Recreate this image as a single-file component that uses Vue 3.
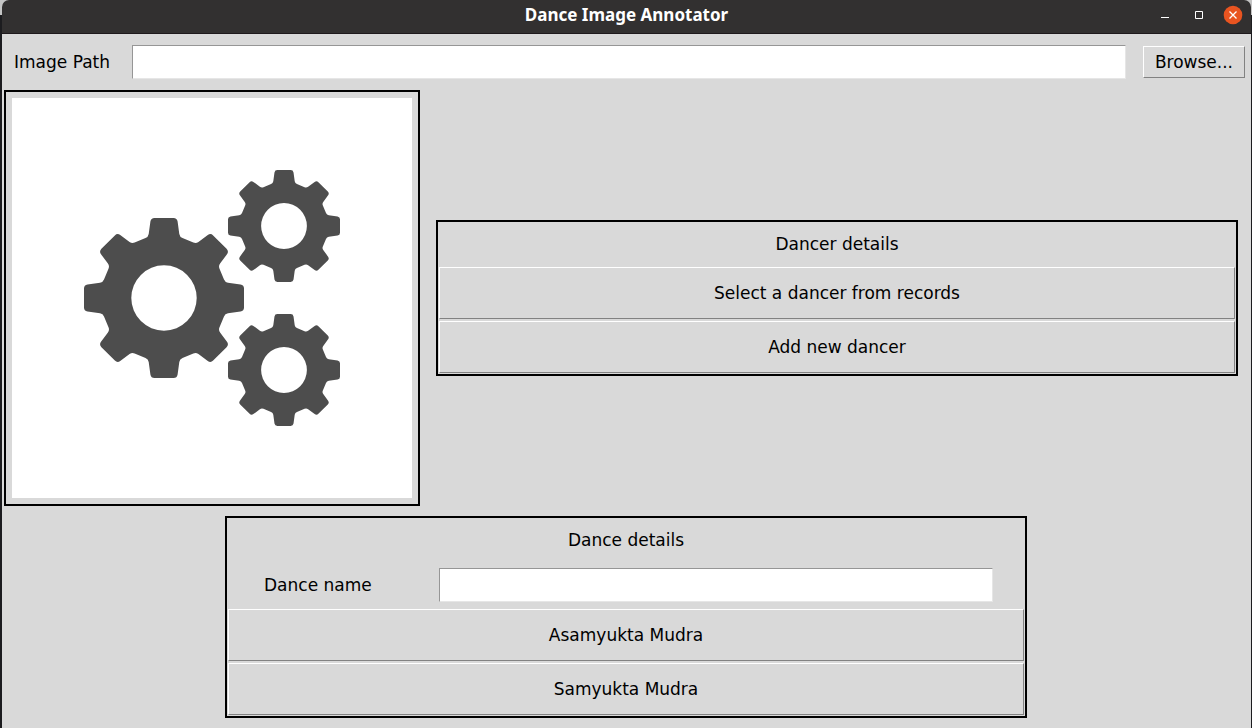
<script setup>
import { ref } from 'vue'

const imagePath = ref('')
const danceName = ref('')

// One tooth pointing up, listed clockwise: [command, ...points]
const makeTooth = (r) => [
  ['L', [-18.5, -60]],
  ['Q', [-15.8, -61], [-15.3, -64]],
  ['L', [-13.6, -r + 3.5]],
  ['Q', [-13, -r], [-9.5, -r]],
  ['L', [9.5, -r]],
  ['Q', [13, -r], [13.6, -r + 3.5]],
  ['L', [15.3, -64]],
  ['Q', [15.8, -61], [18.5, -60]],
]

function buildGear() {
  let d = ''
  for (let i = 0; i < 8; i++) {
    const a = (i * Math.PI) / 4
    const c = Math.cos(a)
    const s = Math.sin(a)
    // The diagonal teeth are a little shorter
    for (const [cmd, ...pts] of makeTooth(i % 2 ? 79 : 80)) {
      const letter = d === '' ? 'M' : cmd
      d += letter + pts.map(([x, y]) => `${(x * c - y * s).toFixed(2)} ${(x * s + y * c).toFixed(2)}`).join(' ')
    }
  }
  return d + 'Z M32.7 0A32.7 32.7 0 1 0 -32.7 0A32.7 32.7 0 1 0 32.7 0Z'
}

const gear = buildGear()
</script>

<template>
  <div class="desktop">
    <div class="window">
      <header class="titlebar">
        <h1>Dance Image Annotator</h1>
        <div class="controls">
          <button type="button" aria-label="Minimize">
            <svg width="20" height="20" viewBox="0 0 20 20"><path d="M6 12h8v1H6z" fill="#fff" /></svg>
          </button>
          <button type="button" aria-label="Maximize">
            <svg width="20" height="20" viewBox="0 0 20 20"><path d="M6.500 6.500h7v7h-7z" fill="none" stroke="#fff" /></svg>
          </button>
          <button type="button" aria-label="Close">
            <svg width="20" height="20" viewBox="0 0 20 20">
              <circle cx="10" cy="10" r="9.300" fill="#e95420" />
              <path d="M6.500 6.500l7 7M13.500 6.500l-7 7" stroke="#fff" stroke-width="1.300" />
            </svg>
          </button>
        </div>
      </header>

      <form class="path-row" @submit.prevent>
        <label for="image-path">Image Path</label>
        <input id="image-path" v-model="imagePath" class="entry" type="text" />
        <button type="button" class="raised browse">Browse...</button>
      </form>

      <main>
        <div class="middle">
          <div class="frame preview">
            <svg viewBox="0 0 400 400" role="img" aria-label="Gears">
              <g fill="#4d4d4d" fill-rule="evenodd">
                <path :d="gear" transform="translate(152 200)" />
                <path :d="gear" transform="translate(272 128) scale(.7)" />
                <path :d="gear" transform="translate(272 272) scale(.7)" />
              </g>
            </svg>
          </div>
          <section class="frame panel">
            <h2>Dancer details</h2>
            <button type="button" class="raised wide">Select a dancer from records</button>
            <button type="button" class="raised wide">Add new dancer</button>
          </section>
        </div>

        <section class="frame panel dance">
          <h2>Dance details</h2>
          <div class="field">
            <label for="dance-name">Dance name</label>
            <input id="dance-name" v-model="danceName" class="entry" type="text" />
          </div>
          <button type="button" class="raised wide">Asamyukta Mudra</button>
          <button type="button" class="raised wide">Samyukta Mudra</button>
        </section>
      </main>
    </div>
  </div>
</template>

<style>
body {
  margin: 0;
}
</style>

<style scoped>
* {
  box-sizing: border-box;
}

.desktop {
  min-height: 100vh;
  padding: 0 1px 0 2px;
  display: flex;
  background: linear-gradient(#c4c4c4 15px, #1c1c1f 15px);
  font: 17px/20px "DejaVu Sans", sans-serif;
  color: #000;
}

.window {
  flex: 1;
  min-width: 0;
  background: #d9d9d9;
  border-radius: 7px 7px 0 0;
  overflow: hidden;
}

.titlebar {
  display: grid;
  grid-template-columns: 1fr auto 1fr;
  align-items: center;
  height: 34px;
  padding: 0 8px 3px;
  background: #323030;
  border-bottom: 1px solid #1e191c;
}

h1 {
  grid-column: 2;
  margin: 0;
  font: bold 17px/20px "Noto Sans", sans-serif;
  color: #fff;
}

.controls {
  display: flex;
  justify-content: flex-end;
  gap: 14px;
}

.controls button {
  width: 20px;
  height: 20px;
  padding: 0;
  border: 0;
  background: none;
}

.controls svg {
  display: block;
}

.path-row {
  display: flex;
  align-items: center;
  padding: 11px 6px 11px 12px;
}

.path-row label {
  flex: 0 0 118px;
}

.entry {
  flex: 1;
  min-width: 0;
  height: 34px;
  padding: 4px 6px;
  border: 1px solid;
  border-color: #969696 #e6e6e6 #e6e6e6 #969696;
  background: #fff;
  font: inherit;
  color: inherit;
  outline: none;
}

.raised {
  padding: 0;
  border: 1px solid;
  border-color: #fff #828282 #828282 #fff;
  border-radius: 0;
  background: #d9d9d9;
  font: inherit;
  color: inherit;
}

.browse {
  height: 32px;
  margin-left: 17px;
  padding: 0 11px;
}

.middle {
  display: flex;
  align-items: center;
  gap: 16px;
  padding: 0 13px 0 2px;
}

.frame {
  border: 2px solid #000;
}

.preview {
  flex: none;
  padding: 6px;
}

.preview svg {
  display: block;
  width: 400px;
  height: 400px;
  background: #fff;
}

.panel {
  display: flex;
  flex: 1;
  flex-direction: column;
  gap: 2px;
  padding: 0 1px 1px;
}

.panel h2 {
  margin: 0;
  padding: 12px 0 11px;
  font: inherit;
  text-align: center;
}

.wide {
  height: 52px;
}

.dance {
  margin: 10px 224px 10px 223px;
}

.field {
  display: flex;
  align-items: center;
  padding: 5px 31px 5px 36px;
}

.field label {
  flex: 0 0 175px;
}
</style>
